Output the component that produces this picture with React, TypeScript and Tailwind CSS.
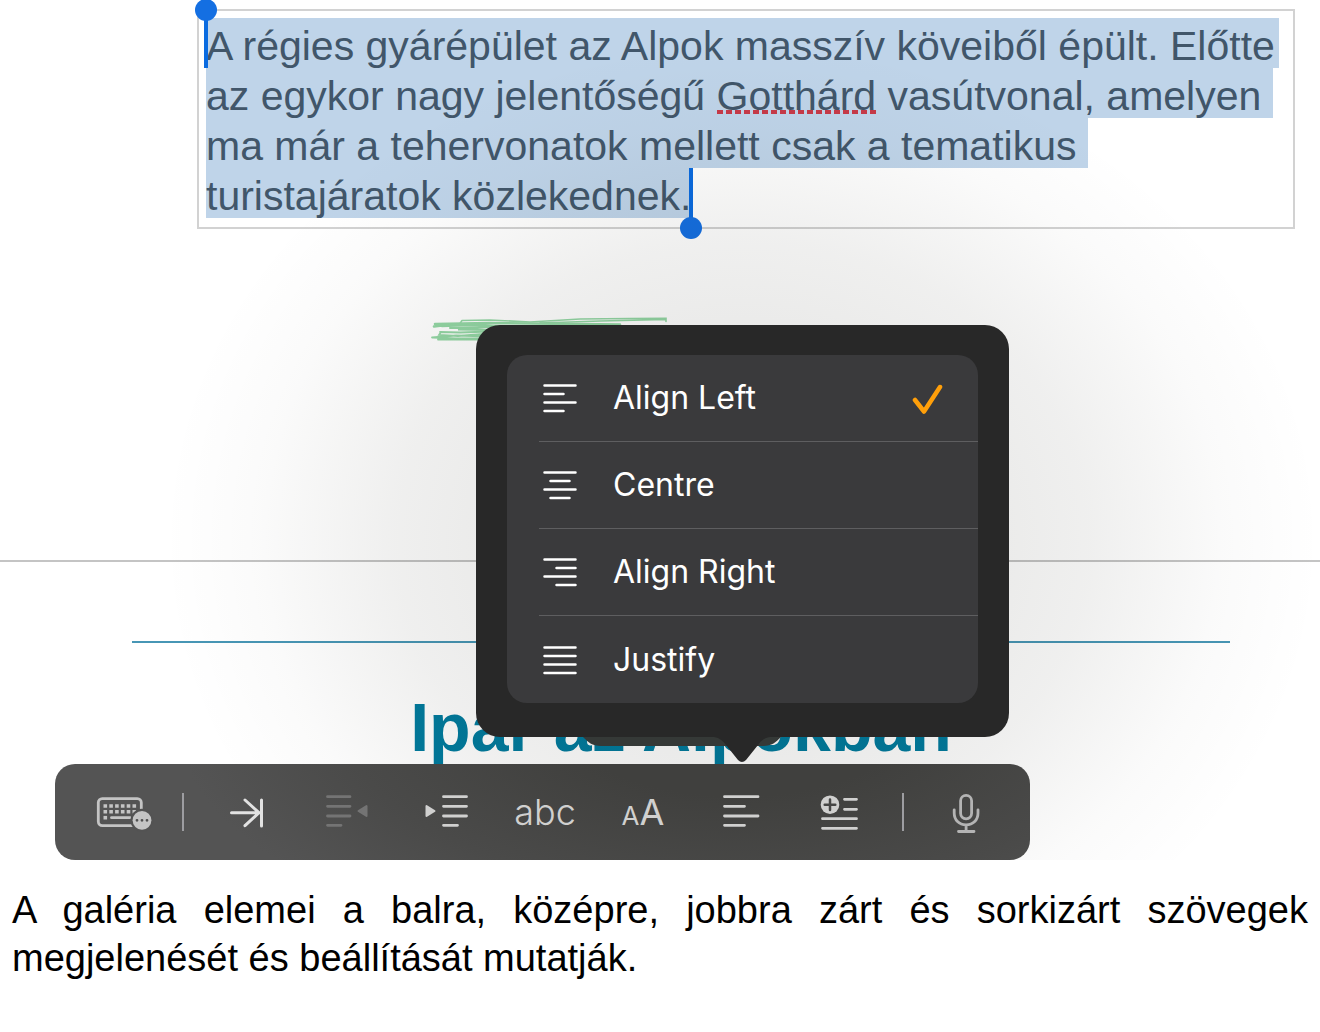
import React, { useState } from 'react';

type Align = 'left' | 'center' | 'right' | 'justify';

interface AlignOption {
  id: Align;
  label: string;
  path: string;
}

const alignOptions: AlignOption[] = [
  { id: 'left', label: 'Align Left', path: 'M1.5 2.5h31M1.5 11h19M1.5 19.5h31M1.5 28h19' },
  { id: 'center', label: 'Centre', path: 'M1.5 2.5h31M7.5 11h19M1.5 19.5h31M7.5 28h19' },
  { id: 'right', label: 'Align Right', path: 'M1.5 2.5h31M13.5 11h19M1.5 19.5h31M13.5 28h19' },
  { id: 'justify', label: 'Justify', path: 'M1.5 2.5h31M1.5 11h31M1.5 19.5h31M1.5 28h31' },
];

interface ToolProps {
  label: string;
  disabled?: boolean;
  children: React.ReactNode;
}

const Tool: React.FC<ToolProps> = ({ label, disabled, children }) => (
  <button
    type="button"
    aria-label={label}
    disabled={disabled}
    className="flex h-24 w-[98px] shrink-0 items-center justify-center text-[#d0d0cf] disabled:text-[#747474]"
  >
    {children}
  </button>
);

const Glyph: React.FC<{ children: React.ReactNode }> = ({ children }) => (
  <svg
    className="h-24 w-[98px]"
    viewBox="0 0 98 96"
    fill="none"
    stroke="currentColor"
    strokeWidth="2.8"
    strokeLinecap="round"
    strokeLinejoin="round"
    aria-hidden="true"
  >
    {children}
  </svg>
);

const AlignMenu: React.FC<{ value: Align; onChange: (value: Align) => void }> = ({ value, onChange }) => (
  <div className="absolute bottom-[123px] -left-[216px] z-10 w-[533px] rounded-3xl bg-[#282828] px-[31px] pt-[30px] pb-[34px]">
    <div role="menu" aria-label="Alignment" className="overflow-hidden rounded-[20px] bg-[#3a3a3c]">
      {alignOptions.map((option, index) => (
        <button
          key={option.id}
          type="button"
          role="menuitemradio"
          aria-checked={value === option.id}
          onClick={() => onChange(option.id)}
          className="block w-full pl-8 text-left"
        >
          <span
            className={
              index < alignOptions.length - 1
                ? 'flex h-[87px] items-center border-b border-[#5e5e60] pr-8 pl-1'
                : 'flex h-[87px] items-center pr-8 pl-1'
            }
          >
            <svg className="h-[30px] w-[34px]" viewBox="0 0 34 30" fill="none" stroke="#fff" strokeWidth="2.5" strokeLinecap="round">
              <path d={option.path} />
            </svg>
            <span className="ml-9 flex-1 font-['Inter',sans-serif] text-[32px] text-white">{option.label}</span>
            {value === option.id && (
              <svg className="h-8 w-9" viewBox="0 0 36 32" fill="none" stroke="#ff9f0a" strokeWidth="4.5" strokeLinecap="round" strokeLinejoin="round">
                <path d="M5 18l9 11.500L30 5" />
              </svg>
            )}
          </span>
        </button>
      ))}
    </div>
    {/* Edge of the callout behind, and the pointer */}
    <svg className="absolute top-full left-[107px] h-[26px] w-[200px]" viewBox="0 0 200 26" aria-hidden="true">
      <path d="M0 0C5 5 9 9 18 9H180C189 9 193 5 198 0Z" fill="#353937" />
      <path d="M131 0C137 1 140 4 143 8L155 23Q159 27 163 23L175 8C178 4 181 1 187 0Z" fill="#282828" />
    </svg>
  </div>
);

export default function App() {
  const [align, setAlign] = useState<Align>('left');

  return (
    <main className="min-h-screen bg-white font-['Liberation_Sans',Arial,sans-serif]">
      <div className="relative overflow-hidden">
        {/* First page */}
        <section className="border-b-2 border-[#c4c4c4] pt-[9px] pb-[217px]">
          <div className="mr-[25px] ml-[197px] border-2 border-[#d2d2d2] pt-[7px] pb-[9px] pl-[7px]">
            <div className="flex flex-col items-start text-[41px] leading-[44px] whitespace-nowrap text-[#41566a]">
              <span className="relative bg-[#bfd4e9] pt-1.5 pr-1">
                A régies gyárépület az Alpok masszív köveiből épült. Előtte
                <i className="absolute -top-2 -left-0.5 h-[58px] w-1 bg-[#0a6be0]" />
                <i className="absolute -top-[19px] -left-[11px] size-[22px] rounded-full bg-[#146fe2]" />
              </span>
              <span className="bg-[#bfd4e9] pt-1.5 pr-3">
                az egykor nagy jelentőségű{' '}
                <span className="bg-[repeating-linear-gradient(90deg,#c73a48_0px,#c73a48_6px,transparent_6px,transparent_9px)] bg-[length:100%_4px] bg-[position:0_37px] bg-no-repeat">
                  Gotthárd
                </span>{' '}
                vasútvonal, amelyen
              </span>
              <span className="bg-[#bfd4e9] pt-1.5 pr-3">ma már a tehervonatok mellett csak a tematikus</span>
              <span className="relative bg-[#bfd4e9] pt-1.5">
                turistajáratok közlekednek.
                <i className="absolute top-0 -right-0.5 h-[54px] w-1 bg-[#0a6be0]" />
                <i className="absolute top-[49px] -right-[11px] size-[22px] rounded-full bg-[#146fe2]" />
              </span>
            </div>
          </div>
          <svg className="mt-[86px] ml-[430px] h-7 w-60" viewBox="0 0 240 28" fill="none" stroke="#93d6a4" strokeLinecap="round" aria-hidden="true">
            <path d="M32 5.500L60 5L100 7L150 4L200 3.500L236 3.200V6.500M236 4.500L170 6L110 8M32 5.500L30 8.500" strokeWidth="1.600" />
            <path d="M5 9L60 8L190 9.500M4 11.500L24 9M12 11L40 10L80 12" strokeWidth="2.600" />
            <path d="M20 13L60 12L28 14.500L60 15" strokeWidth="2" />
            <path d="M10 17L30 17.500L60 16.500M11 17L9 20L28 21L60 18.500M2 22.500L26 20.500L60 21.500M3 22.500L26 23.500H60M8 24.500H60" strokeWidth="1.800" />
          </svg>
        </section>

        {/* Second page */}
        <section className="mr-[90px] ml-[132px] pt-[79px] pb-[93px]">
          <hr className="border-t-2 border-[#4796b5]" />
          <h1 className="mt-11 text-center text-[68px] leading-[80px] font-bold text-[#007b9e]">Ipar az Alpokban</h1>
        </section>

        {/* Soft shade around the popover */}
        <div className="pointer-events-none absolute inset-0 bg-[radial-gradient(580px_500px_at_742px_540px,rgba(20,20,10,0.09)_40%,rgba(20,20,10,0.065)_60%,rgba(20,20,10,0.02)_83%,transparent_100%)]" />

        {/* Floating format bar */}
        <div
          role="toolbar"
          aria-label="Formatting"
          className="absolute bottom-0 left-[55px] flex items-center rounded-[20px] bg-[radial-gradient(560px_240px_at_70%_-40px,#40403e_30%,#4a4a49_70%,#545454_100%)] pr-[15px] pl-5"
        >
          <Tool label="Keyboard options">
            <Glyph>
              <g stroke="#c4c4c4">
                <rect x="23.300" y="34.600" width="43" height="27" rx="4" />
                <path d="M36.500 53.700H55" />
                <path strokeWidth="3.600" strokeLinecap="butt" strokeDasharray="3.600 2.200" d="M28.500 42H61.500M28.500 47.700H61.500" />
                <path strokeWidth="3.600" strokeLinecap="butt" d="M28.500 53.700h3.600" />
              </g>
              <circle cx="67" cy="56.300" r="11.500" fill="#535353" stroke="none" />
              <circle cx="67" cy="56.300" r="9.400" fill="#c4c4c4" stroke="none" />
              <path d="M62 56.300h.01M67 56.300h.01M72 56.300h.01" stroke="#505050" />
            </Glyph>
          </Tool>
          <span className="mr-[18px] ml-[9px] h-[38px] w-0.5 bg-[#9d9da1]" />
          <Tool label="Tab">
            <Glyph>
              <path stroke="#e2e2e2" strokeWidth="3" d="M29.500 48.700H57M43 36L57 48.700L43 61.700M59.500 36V62" />
            </Glyph>
          </Tool>
          <Tool label="Decrease indent" disabled>
            <Glyph>
              <path d="M27.500 32.700H50M27.500 42.300H50M27.500 52H50M27.500 61.300H41" />
              <path d="M58.500 47L66.500 42V52Z" fill="currentColor" strokeWidth="2" />
            </Glyph>
          </Tool>
          <Tool label="Increase indent">
            <Glyph>
              <path d="M45.500 32.700H68.500M45.500 42.300H68.500M45.500 52H68.500M45.500 61.300H59.500" />
              <path d="M36.500 47L28.500 42V52Z" fill="currentColor" strokeWidth="2" />
            </Glyph>
          </Tool>
          <Tool label="Text style">
            <span className="font-['Inter',sans-serif] text-[36px] leading-10 font-light">abc</span>
          </Tool>
          <Tool label="Text size">
            <span className="flex items-baseline pt-1 font-['Inter',sans-serif] text-[36px] leading-10">
              <span className="text-[26px]">A</span>
              <span>A</span>
            </span>
          </Tool>
          <div className="relative">
            <Tool label="Alignment">
              <Glyph>
                <path d="M32.500 32.700H66M32.500 42.300H52.500M32.500 52H66M32.500 61.300H52.500" />
              </Glyph>
            </Tool>
            <AlignMenu value={align} onChange={setAlign} />
          </div>
          <Tool label="Insert">
            <Glyph>
              <circle cx="40" cy="40.700" r="9.300" fill="currentColor" stroke="none" />
              <path d="M34.700 40.700H45.300M40 35.400V46" stroke="#464645" strokeWidth="2.500" />
              <path d="M54.500 35.300H66.500M54.500 45.300H66.500M32.500 54.700H66.500M32.500 64.300H66.500" />
            </Glyph>
          </Tool>
          <span className="mr-[13px] ml-[14px] h-[38px] w-0.5 bg-[#9d9da1]" />
          <Tool label="Dictate">
            <Glyph>
              <g stroke="#b4b4b4">
                <rect x="43.600" y="31.300" width="11" height="23.500" rx="5.500" />
                <path d="M37.200 45.800V49C37.200 56 42 60.800 49.100 60.800S61 56 61 49V45.800M49.100 61V67.500M41.500 67.500H57" />
              </g>
            </Glyph>
          </Tool>
        </div>
      </div>

      <p className="mx-3 mt-[26px] text-justify text-[38px] leading-12 text-black">
        A galéria elemei a balra, középre, jobbra zárt és sorkizárt szövegek megjelenését és beállítását mutatják.
      </p>
    </main>
  );
}
